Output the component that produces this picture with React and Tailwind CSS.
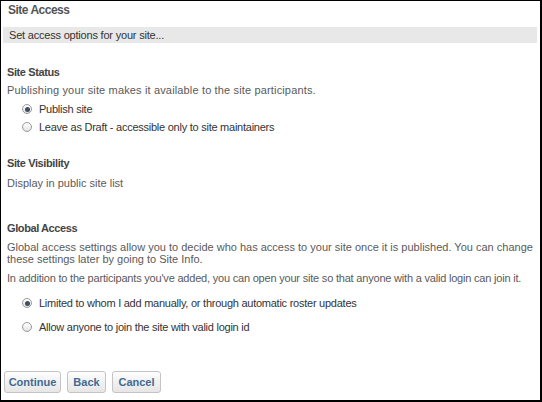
import React from "react";

function Radio({ checked }) {
  return (
    <span className="relative inline-flex w-[10px] h-[10px] rounded-full border border-[#9a9a9a] bg-gradient-to-b from-[#ffffff] to-[#e2e2e2] items-center justify-center shrink-0">
      {checked && <span className="block w-[5px] h-[5px] rounded-full bg-[#3f4f62]" />}
    </span>
  );
}

function Option({ checked, label, className }) {
  return (
    <div className={"flex items-center h-[16px] pl-[19px] gap-[7px] " + className}>
      <Radio checked={checked} />
      <span className="text-[11px] leading-[16px] text-[#333] whitespace-nowrap tracking-[-0.25px]">{label}</span>
    </div>
  );
}

function Btn({ children, w }) {
  return (
    <button className={"h-[22px] rounded-[3px] border border-[#c4c4c4] bg-gradient-to-b from-[#fdfdfd] to-[#e6e6e6] text-[11px] font-bold text-[#3f6a94] flex items-center justify-center " + w}>
      {children}
    </button>
  );
}

export default function App() {
  return (
    <div
      className="w-[542px] h-[402px] bg-white border-l border-t border-r-2 border-b-2 border-black overflow-hidden px-[2px]"
      style={{ fontFamily: '"Liberation Sans", Arial, sans-serif' }}
    >
      <div className="h-[19px] leading-[19px] text-[12px] font-bold text-[#555] pl-[5px] tracking-[-0.5px]">Site Access</div>
      <div className="mt-[7px] h-[16px] bg-[#e8e8e8] text-[11px] leading-[16px] text-[#333] pl-[6px] mr-[1px] tracking-[-0.2px]">
        Set access options for your site...
      </div>

      <div className="pl-[4px]">
        <div className="mt-[22px] text-[11px] leading-[14px] font-bold text-[#444] tracking-[-0.4px]">Site Status</div>
        <div className="mt-[4px] text-[11px] leading-[14px] text-[#5a5a5a] tracking-[0.15px]">
          Publishing your site makes it available to the site participants.
        </div>
      </div>
      <Option checked className="mt-[4px]" label="Publish site" />
      <Option className="mt-[2px]" label="Leave as Draft - accessible only to site maintainers" />

      <div className="pl-[4px]">
        <div className="mt-[21px] text-[11px] leading-[14px] font-bold text-[#444] tracking-[-0.4px]">Site Visibility</div>
        <div className="mt-[6px] text-[11px] leading-[14px] text-[#5a5a5a]">Display in public site list</div>

        <div className="mt-[31px] text-[11px] leading-[14px] font-bold text-[#444] tracking-[-0.4px]">Global Access</div>
        <div className="mt-[6px] text-[11px] leading-[12px] text-[#5a5a5a] whitespace-nowrap">
          <div>
            Global access settings allow you to decide who has access to your site once it is published. You can change
          </div>
          <div>these settings later by going to Site Info.</div>
        </div>
        <div className="mt-[6px] text-[11px] leading-[14px] text-[#5a5a5a] whitespace-nowrap tracking-[-0.2px]">
          In addition to the participants you've added, you can open your site so that anyone with a valid login can join it.
        </div>
      </div>
      <Option checked className="mt-[10px]" label="Limited to whom I add manually, or through automatic roster updates" />
      <Option className="mt-[8px]" label="Allow anyone to join the site with valid login id" />

      <div className="mt-[36px] flex gap-[6px] pl-[1px]">
        <Btn w="w-[57px]">Continue</Btn>
        <Btn w="w-[39px]">Back</Btn>
        <Btn w="w-[49px]">Cancel</Btn>
      </div>
    </div>
  );
}
